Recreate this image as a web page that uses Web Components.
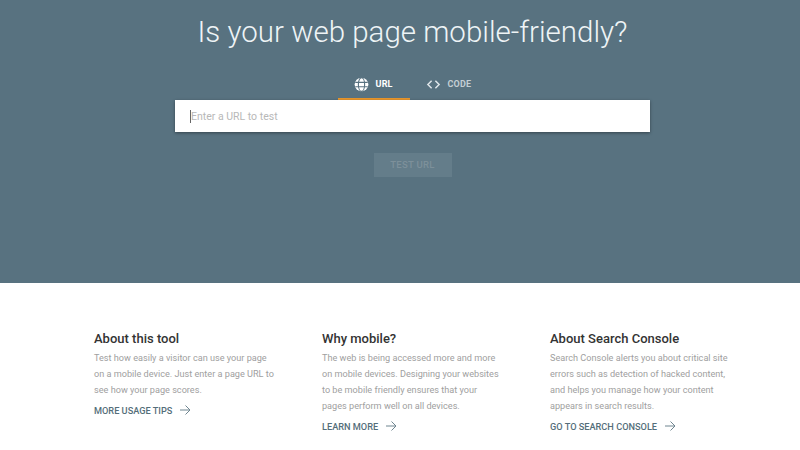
<!DOCTYPE html>
<html>
<head>
<meta charset="utf-8">
<style>
  html, body { margin: 0; padding: 0; width: 800px; height: 450px; overflow: hidden; background: #fff; font-family: Roboto, "Liberation Sans", sans-serif; }
</style>
</head>
<body>
<test-hero></test-hero>
<info-row>
  <info-card heading="About this tool" link="MORE USAGE TIPS">Test how easily a visitor can use your page<br>on a mobile device. Just enter a page URL to<br>see how your page scores.</info-card>
  <info-card heading="Why mobile?" link="LEARN MORE">The web is being accessed more and more<br>on mobile devices. Designing your websites<br>to be mobile friendly ensures that your<br>pages perform well on all devices.</info-card>
  <info-card heading="About Search Console" link="GO TO SEARCH CONSOLE">Search Console alerts you about critical site<br>errors such as detection of hacked content,<br>and helps you manage how your content<br>appears in search results.</info-card>
</info-row>

<script>
class TestHero extends HTMLElement {
  constructor() {
    super();
    this.attachShadow({ mode: 'open' });
  }

  connectedCallback() {
    this.shadowRoot.innerHTML = `
      <style>
        :host {
          display: flex;
          flex-direction: column;
          align-items: center;
          box-sizing: border-box;
          height: 283px;
          padding-left: 25px;
          background: #587280;
          color: #fff;
        }
        h1 {
          margin: 12px 0 0;
          font-size: 29.5px;
          line-height: 40px;
          font-weight: 300;
          color: #eef4f6;
        }
        .tabs {
          display: flex;
          margin: 18px 6px 0 0;
          height: 30px;
        }
        .tab {
          display: flex;
          align-items: center;
          gap: 7px;
          box-sizing: border-box;
          width: 72px;
          height: 30px;
          padding: 0 0 0 16px;
          font-size: 9px;
          font-weight: 700;
          letter-spacing: 0.2px;
          border-bottom: 2px solid transparent;
        }
        .tab svg { display: block; }
        .tab.on { border-bottom-color: #e8962c; }
        .tab.off { color: #c9d4d9; opacity: .95; }
        .box {
          display: flex;
          align-items: center;
          box-sizing: border-box;
          width: 475px;
          height: 32px;
          padding-left: 15px;
          background: #fff;
          box-shadow: 0 1px 3px rgba(0,0,0,.4);
          font-size: 10.5px;
          color: #b8b8b8;
        }
        .caret {
          width: 1px;
          height: 13px;
          background: #666;
        }
        .btn {
          display: flex;
          align-items: center;
          justify-content: center;
          box-sizing: border-box;
          width: 78px;
          height: 24px;
          margin-top: 21px;
          padding-bottom: 2px;
          background: #647d8a;
          color: #7d909a;
          font-size: 9.5px;
          font-weight: 500;
          letter-spacing: .3px;
        }
      </style>
      <h1>Is your web page mobile-friendly?</h1>
      <div class="tabs">
        <div class="tab on">
          <svg width="15" height="15" viewBox="0 0 24 24"><circle cx="12" cy="12" r="11" fill="#fff"/><g fill="none" stroke="#587280" stroke-width="1.8"><ellipse cx="12" cy="12" rx="5" ry="11"/><path d="M2 8.5h20M2 15.5h20"/></g></svg>
          <span>URL</span>
        </div>
        <div class="tab off">
          <svg width="15" height="15" viewBox="0 0 24 24" fill="none" stroke="#e6edf0" stroke-width="2.4"><path d="M9 6l-6 6 6 6M15 6l6 6-6 6"/></svg>
          <span>CODE</span>
        </div>
      </div>
      <div class="box"><span class="caret"></span><span>Enter a URL to test</span></div>
      <div class="btn">TEST URL</div>
    `;
  }
}

class InfoRow extends HTMLElement {
  constructor() {
    super();
    this.attachShadow({ mode: 'open' });
    this.shadowRoot.innerHTML = `
      <style>
        :host {
          display: grid;
          grid-template-columns: repeat(3, 228px);
          padding: 48px 0 0 94px;
        }
      </style>
      <slot></slot>
    `;
  }
}

class InfoCard extends HTMLElement {
  constructor() {
    super();
    this.attachShadow({ mode: 'open' });
  }

  connectedCallback() {
    this.shadowRoot.innerHTML = `
      <style>
        :host { display: block; }
        h3 {
          margin: 0;
          font-size: 13px;
          line-height: 16px;
          font-weight: 500;
          color: #333;
        }
        p {
          margin: 3px 0 0;
          font-size: 9.15px;
          line-height: 16px;
          color: #a0a0a0;
        }
        a {
          display: flex;
          align-items: center;
          gap: 7px;
          margin-top: 4px;
          height: 16px;
          font-size: 9.2px;
          font-weight: 500;
          color: #546e7a;
        }
      </style>
      <h3>${this.getAttribute('heading')}</h3>
      <p><slot></slot></p>
      <a>${this.getAttribute('link')}
        <svg width="12" height="12" viewBox="0 0 12 12" fill="none" stroke="#6f8590" stroke-width="1"><path d="M1 6h10M6.5 1.5L11 6l-4.5 4.5"/></svg>
      </a>
    `;
  }
}

customElements.define('test-hero', TestHero);
customElements.define('info-row', InfoRow);
customElements.define('info-card', InfoCard);
</script>
</body>
</html>
